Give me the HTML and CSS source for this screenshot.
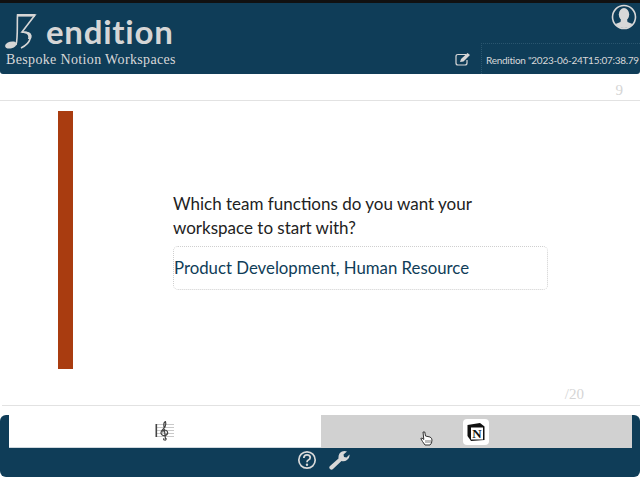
FILE: index.html
```html
<!DOCTYPE html>
<html lang="en">
<head>
    <meta charset="UTF-8">
    <title>Rendition</title>
    <link rel="stylesheet" href="styles.css">
</head>
<body>
    <div class="page">
        <header class="header">
            <div class="brand">
                <div class="logo">
                    <svg class="logo-note" width="41" height="38" viewBox="0 0 41 38">
                        <ellipse cx="5.8" cy="33" rx="5.8" ry="3.4" transform="rotate(-15 5.8 33)" fill="#d6d6d6"/>
                        <path d="M11 33 C13 26 12 14 12.5 3 L30 3 L17 20 C24 20 27 22 25 27 C24 31 20 34 16 36" fill="none" stroke="#d6d6d6" stroke-width="1.6"/>
                        <path d="M12 2 H30 V4.6 H12 Z" fill="#d6d6d6"/>
                        <path d="M17 19.5 C24 19 28 21 26 27 L23 27 C24 23 22 21 17 21 Z" fill="#d6d6d6"/>
                    </svg>
                    <span class="logo-text">endition</span>
                </div>
                <div class="tagline">Bespoke Notion Workspaces</div>
            </div>
            <div class="header-right">
                <svg class="avatar" width="26" height="26" viewBox="0 0 26 26">
                    <defs><clipPath id="avatar-clip"><circle cx="13" cy="13" r="11"/></clipPath></defs>
                    <circle cx="13" cy="13" r="11.5" fill="#0f3d58" stroke="#d8d8d8" stroke-width="1.6"/>
                    <g clip-path="url(#avatar-clip)" fill="#d8d8d8">
                        <ellipse cx="13" cy="10.5" rx="5.2" ry="6.5"/>
                        <path d="M10 15 L16 15 L16.5 18 L24 21 L24 26 L2 26 L2 21 L9.5 18 Z"/>
                    </g>
                </svg>
                <div class="title-row">
                    <svg class="edit-icon" width="16" height="14" viewBox="0 0 16 14">
                        <path d="M11 2.5 L3 2.5 Q1 2.5 1 4.5 L1 11 Q1 13 3 13 L10 13 Q12 13 12 11 L12 8" fill="none" stroke="#d8d8d8" stroke-width="1.2"/>
                        <path d="M5 10 L6 7 L12.5 1 L15 3 L8.5 9.5 Z" fill="#d8d8d8"/>
                    </svg>
                    <div class="title-box">Rendition "2023-06-24T15:07:38.79</div>
                </div>
            </div>
        </header>

        <div class="page-bar"><span class="page-num">9</span></div>

        <main class="main">
            <div class="question-row">
                <div class="side-bar"></div>
                <div class="question">
                    <p class="question-text">Which team functions do you want your workspace to start with?</p>
                    <div class="answer">Product Development, Human Resource</div>
                </div>
            </div>
            <div class="total">/20</div>
        </main>

        <footer class="footer">
            <div class="tabs">
                <div class="tab tab-active">
                    <svg width="20" height="20" viewBox="0 0 20 20">
                        <path d="M1 3.5 H19 M1 6.5 H19 M1 9.5 H19 M1 12.5 H19 M1 15.5 H19" stroke="#bbb" stroke-width="0.8"/>
                        <rect x="0.5" y="3" width="1.6" height="13" fill="#444"/>
                        <path d="M11 17 Q11.5 19.5 9.5 19 Q8 18.5 9 17.3 M10.5 18 L8.8 4 Q8.8 1 10.5 0.7 Q11.5 3 10 6 L6.5 10 Q5 13 8 14.5 Q12 15 12.7 12 Q12.5 9 9.5 9 Q7.5 9.5 8 11.5" fill="none" stroke="#444" stroke-width="1.2"/>
                    </svg>
                </div>
                <div class="tab tab-notion">
                    <div class="notion-icon">
                        <svg width="20" height="20" viewBox="0 0 20 20">
                            <path d="M1.5 3 L14 1 L18.5 4.5 L18.5 18 L5 19 L1.5 14 Z" fill="#111"/>
                            <rect x="5" y="5.5" width="12" height="12" fill="#fff"/>
                            <text x="11" y="16" text-anchor="middle" class="notion-letter">N</text>
                        </svg>
                    </div>
                </div>
            </div>
            <div class="tools">
                <svg width="20" height="20" viewBox="0 0 20 20">
                    <circle cx="10" cy="10" r="8.2" fill="none" stroke="#d8d8d8" stroke-width="1.7"/>
                    <path d="M6.8 8 Q7 4.8 10 4.8 Q13.2 4.8 13.2 7.6 Q13.2 9.2 11.4 10 Q10 10.7 10 12.2" fill="none" stroke="#d8d8d8" stroke-width="1.8"/>
                    <circle cx="10" cy="14.7" r="1.2" fill="#d8d8d8"/>
                </svg>
                <svg width="22" height="20" viewBox="0 0 22 20">
                    <path d="M2 19 Q0.5 17.5 2 16 L10.5 8.5 Q10 3.5 14 1.5 Q16.5 0.5 19 1.5 L15.5 4.5 L16 7 L18.5 7.5 L21.5 4.5 Q22 8 19 10 Q16.5 11.8 13.5 11 L5 19 Q3.5 20.3 2 19 Z" fill="#d8d8d8"/>
                </svg>
            </div>
        </footer>

        <svg class="cursor" width="13" height="15" viewBox="0 0 13 15">
            <path d="M3 1 L4.8 1 L5.5 5 L10 6 Q12 7 12 9 L11.5 12 L10 14 L5 14 L2.5 10.5 L0.8 7.5 L2 7 L3.8 8.5 Z" fill="#fff" stroke="#333" stroke-width="1"/>
            <path d="M6 9 V12 M8 9 V12 M10 9 V12" stroke="#555" stroke-width="0.8"/>
        </svg>
    </div>
</body>
</html>
```

FILE: styles.css
```css
body {
    margin: 0;
    background: #fff;
    font-family: 'Lato', 'Noto Sans', sans-serif;
}
.page {
    position: relative;
    width: 640px;
    height: 480px;
    display: flex;
    flex-direction: column;
    overflow: hidden;
    border-top: 3px solid #111;
    box-sizing: border-box;
}
.header {
    height: 71px;
    flex: none;
    background: #0f3d58;
    border-radius: 0 0 3px 3px;
    display: flex;
    justify-content: space-between;
    color: #d8d8d8;
}
.brand {
    padding: 9px 0 0 5px;
}
.logo {
    display: flex;
    align-items: flex-end;
    height: 38px;
}
.logo-text {
    font-family: 'Lato', sans-serif;
    font-weight: 700;
    font-size: 33px;
    line-height: 38px;
    letter-spacing: 0.75px;
    color: #d6d6d6;
}
.tagline {
    font-family: 'Liberation Serif', serif;
    font-size: 14px;
    letter-spacing: 0.35px;
    line-height: 16px;
    margin-top: 2px;
    padding-left: 1px;
}
.header-right {
    width: 190px;
    display: flex;
    flex-direction: column;
    align-items: flex-end;
}
.avatar {
    margin: 1px 3px 0 0;
}
.title-row {
    margin-top: 13px;
    width: 100%;
    height: 31px;
    display: flex;
    align-items: center;
}
.edit-icon {
    margin-left: 5px;
    flex: none;
}
.title-box {
    margin-left: 10px;
    padding-left: 4px;
    height: 31px;
    line-height: 33px;
    flex: 1;
    min-width: 0;
    overflow: hidden;
    white-space: nowrap;
    border-top: 1px dotted #2a566f;
    border-left: 1px dotted #2a566f;
    box-sizing: border-box;
    font-size: 10px;
    letter-spacing: -0.27px;
}
.page-bar {
    height: 27px;
    flex: none;
    box-sizing: border-box;
    border-bottom: 1px solid #e2e2e2;
    display: flex;
    justify-content: flex-end;
    align-items: flex-end;
    padding: 0 17px 1px 0;
}
.page-num, .total {
    font-family: 'Liberation Serif', serif;
    font-size: 15px;
    color: #d5d5d5;
}
.main {
    height: 305px;
    flex: none;
    box-sizing: border-box;
    margin-left: 2px;
    border-bottom: 1px solid #e2e2e2;
    display: flex;
    flex-direction: column;
    padding: 10px 0 3px 56px;
}
.question-row {
    display: flex;
    align-items: center;
}
.side-bar {
    width: 15px;
    height: 258px;
    background: #a93c10;
}
.question {
    width: 375px;
    margin-left: 100px;
    padding-top: 2px;
}
.question-text {
    margin: 0 0 6px;
    font-size: 17px;
    line-height: 24px;
    color: #222;
}
.answer {
    height: 44px;
    box-sizing: border-box;
    border: 1px dotted #cfcfcf;
    border-radius: 5px;
    font-size: 16.8px;
    line-height: 42px;
    color: #0f3d58;
}
.total {
    margin-top: auto;
    text-align: right;
    padding-right: 56px;
    line-height: 16px;
}
.footer {
    margin-top: 9px;
    height: 62px;
    flex: none;
    background: #0f3d58;
    border-radius: 6px;
    overflow: hidden;
}
.tabs {
    display: flex;
    padding: 0 8px 0 9px;
    height: 33px;
}
.tab {
    flex: 1;
    display: flex;
    align-items: center;
    justify-content: center;
}
.tab-active {
    background: #fff;
    border-bottom: 1px solid #cfd8de;
    box-sizing: border-box;
}
.tab-notion {
    background: #d1d1d1;
}
.notion-icon {
    width: 26px;
    height: 26px;
    margin-top: 1px;
    background: #fff;
    border-radius: 4px;
    display: flex;
    align-items: center;
    justify-content: center;
}
.notion-letter {
    font-family: 'Liberation Serif', serif;
    font-weight: 700;
    font-size: 13px;
    fill: #111;
}
.tools {
    display: flex;
    justify-content: center;
    gap: 11px;
    padding: 2px 0 0 7px;
}
.cursor {
    position: absolute;
    left: 420px;
    top: 428px;
}
```
